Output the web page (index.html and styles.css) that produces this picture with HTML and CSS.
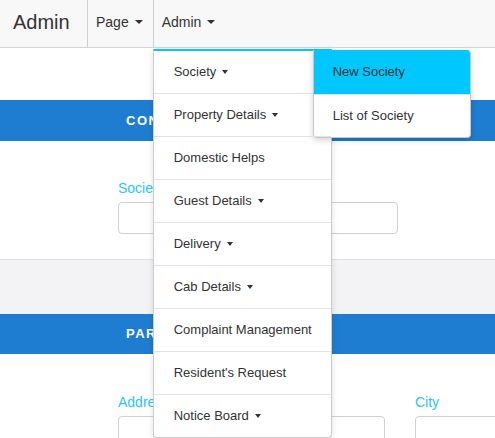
FILE: index.html
```html
<!DOCTYPE html>
<html>
<head>
<meta charset="utf-8">
<link rel="stylesheet" href="styles.css">
</head>
<body>
<nav class="navbar">
  <div class="brand">Admin</div>
  <ul class="nav">
    <li class="nav-item">Page<span class="caret"></span></li>
    <li class="nav-item open">Admin<span class="caret"></span>
      <ul class="dropdown">
        <li class="dd-item">Society<span class="caret small"></span>
          <ul class="submenu">
            <li class="sub-item active">New Society</li>
            <li class="sub-item">List of Society</li>
          </ul>
        </li>
        <li class="dd-item">Property Details<span class="caret small"></span></li>
        <li class="dd-item">Domestic Helps</li>
        <li class="dd-item">Guest Details<span class="caret small"></span></li>
        <li class="dd-item">Delivery<span class="caret small"></span></li>
        <li class="dd-item">Cab Details<span class="caret small"></span></li>
        <li class="dd-item">Complaint Management</li>
        <li class="dd-item">Resident's Request</li>
        <li class="dd-item">Notice Board<span class="caret small"></span></li>
      </ul>
    </li>
  </ul>
</nav>
<main class="main">
  <div class="top-space"></div>
  <section class="card card-one">
    <div class="band">CONTACT</div>
    <div class="card-body">
      <label class="field-label">Society Name</label>
      <div class="input wide"></div>
    </div>
  </section>
  <div class="gap"></div>
  <section class="card card-two">
    <div class="band band-two">PARTICULARS</div>
    <div class="card-body grid">
      <div class="field">
        <label class="field-label">Address</label>
        <div class="input"></div>
      </div>
      <div class="field">
        <label class="field-label">City</label>
        <div class="input"></div>
      </div>
    </div>
  </section>
</main>
</body>
</html>
```

FILE: styles.css
```css
html, body {
  margin: 0;
  padding: 0;
  overflow: hidden;
}
body {
  width: 495px;
  height: 438px;
  font-family: "Liberation Sans", Arial, sans-serif;
  color: #333;
  background: #fff;
  position: relative;
}
ul {
  list-style: none;
  margin: 0;
  padding: 0;
}
.navbar {
  height: 47px;
  background: #f8f8f8;
  border-bottom: 1px solid #d6d6d6;
  display: flex;
  align-items: stretch;
  position: relative;
  z-index: 10;
}
.brand {
  width: 87px;
  box-sizing: border-box;
  padding-left: 13px;
  font-size: 20px;
  line-height: 45px;
  color: #333;
}
.nav {
  display: flex;
  align-items: stretch;
}
.nav-item {
  position: relative;
  border-left: 1px solid #cfcfcf;
  padding: 0 10px 0 8px;
  font-size: 14px;
  line-height: 45px;
  color: #333;
}
.caret {
  display: inline-block;
  width: 0;
  height: 0;
  margin-left: 6px;
  vertical-align: middle;
  border-top: 4px solid #333;
  border-left: 4px solid transparent;
  border-right: 4px solid transparent;
  position: relative;
  top: -1px;
}
.caret.small {
  margin-left: 6px;
  border-top-width: 4px;
  border-left-width: 3.5px;
  border-right-width: 3.5px;
}
.dropdown {
  position: absolute;
  left: -1px;
  top: 49px;
  width: 179px;
  box-sizing: border-box;
  background: #fff;
  border: 1px solid #cccccc;
  border-top: 2px solid #00c8ff;
  border-radius: 0 0 4px 4px;
  box-shadow: 0 2px 6px rgba(0, 0, 0, 0.12);
}
.dd-item {
  position: relative;
  height: 42px;
  line-height: 42px;
  padding-left: 20px;
  font-size: 13px;
  color: #333;
  border-bottom: 1px solid #e3e3e3;
  white-space: nowrap;
}
.dd-item:last-child {
  border-bottom: 0;
}
.submenu {
  position: absolute;
  left: 159px;
  top: -1px;
  width: 158px;
  box-sizing: border-box;
  background: #fff;
  border: 1px solid #c8c8c8;
  border-top: 0;
  border-radius: 0 4px 4px 4px;
  box-shadow: 0 2px 6px rgba(0, 0, 0, 0.18);
  overflow: hidden;
}
.sub-item {
  height: 42px;
  line-height: 42px;
  padding-left: 19px;
  font-size: 13px;
  color: #333;
}
.sub-item.active {
  height: 44px;
  line-height: 44px;
  background: #00c8ff;
  border-bottom: 1px solid #dddddd;
}
.main {
  display: flex;
  flex-direction: column;
}
.top-space {
  height: 52px;
}
.card {
  background: #fff;
}
.card-one {
  border-bottom: 1px solid #e0e0e0;
  box-shadow: 0 1px 2px rgba(0, 0, 0, 0.06);
}
.band {
  height: 41px;
  line-height: 41px;
  background: #1e7dd0;
  color: #fff;
  font-size: 13px;
  font-weight: bold;
  letter-spacing: 1.5px;
  padding-left: 126px;
}
.band-two {
  height: 40px;
  line-height: 40px;
}
.card-body {
  padding-left: 118px;
}
.card-one .card-body {
  padding-top: 37px;
  padding-bottom: 25px;
}
.card-two .card-body {
  padding-top: 38px;
}
.field-label {
  display: block;
  font-size: 14px;
  line-height: 20px;
  color: #29c5f6;
  margin-bottom: 4px;
}
.input {
  height: 32px;
  box-sizing: border-box;
  border: 1px solid #ccd1d7;
  border-radius: 4px;
  background: #fff;
}
.input.wide {
  width: 280px;
}
.gap {
  height: 54px;
  background: #f3f3f5;
}
.grid {
  display: grid;
  grid-template-columns: 267px 120px;
  column-gap: 30px;
}
```
